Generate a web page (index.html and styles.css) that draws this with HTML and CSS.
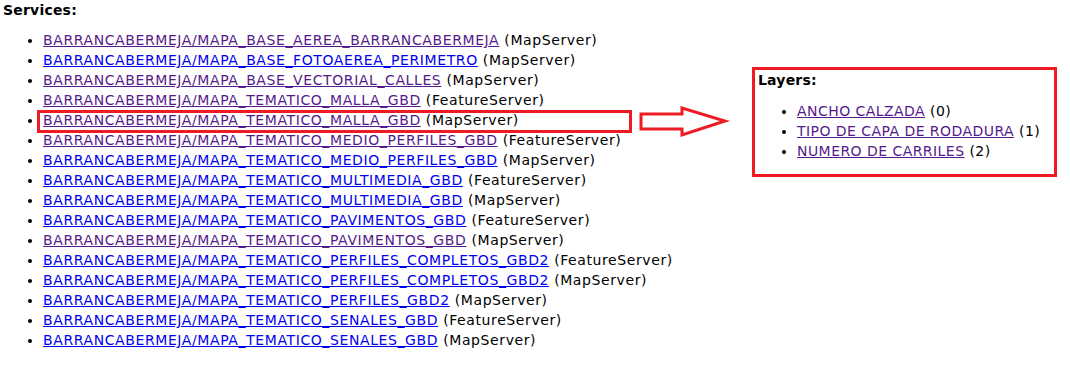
FILE: index.html
```html
<!DOCTYPE html>
<html lang="en">
<head>
    <meta charset="UTF-8">
    <title>ArcGIS REST Services Directory</title>
    <link rel="stylesheet" href="styles.css">
</head>
<body>
    <div class="page">
        <div class="services">
            <b class="title">Services:</b>
            <ul class="list">
                <li><a class="visited" href="#">BARRANCABERMEJA/MAPA_BASE_AEREA_BARRANCABERMEJA</a> (MapServer)</li>
                <li><a href="#">BARRANCABERMEJA/MAPA_BASE_FOTOAEREA_PERIMETRO</a> (MapServer)</li>
                <li><a class="visited" href="#">BARRANCABERMEJA/MAPA_BASE_VECTORIAL_CALLES</a> (MapServer)</li>
                <li><a class="visited" href="#">BARRANCABERMEJA/MAPA_TEMATICO_MALLA_GBD</a> (FeatureServer)</li>
                <li class="picked"><a class="visited" href="#">BARRANCABERMEJA/MAPA_TEMATICO_MALLA_GBD</a> (MapServer)</li>
                <li><a class="visited" href="#">BARRANCABERMEJA/MAPA_TEMATICO_MEDIO_PERFILES_GBD</a> (FeatureServer)</li>
                <li><a href="#">BARRANCABERMEJA/MAPA_TEMATICO_MEDIO_PERFILES_GBD</a> (MapServer)</li>
                <li><a href="#">BARRANCABERMEJA/MAPA_TEMATICO_MULTIMEDIA_GBD</a> (FeatureServer)</li>
                <li><a href="#">BARRANCABERMEJA/MAPA_TEMATICO_MULTIMEDIA_GBD</a> (MapServer)</li>
                <li><a href="#">BARRANCABERMEJA/MAPA_TEMATICO_PAVIMENTOS_GBD</a> (FeatureServer)</li>
                <li><a class="visited" href="#">BARRANCABERMEJA/MAPA_TEMATICO_PAVIMENTOS_GBD</a> (MapServer)</li>
                <li><a href="#">BARRANCABERMEJA/MAPA_TEMATICO_PERFILES_COMPLETOS_GBD2</a> (FeatureServer)</li>
                <li><a href="#">BARRANCABERMEJA/MAPA_TEMATICO_PERFILES_COMPLETOS_GBD2</a> (MapServer)</li>
                <li><a href="#">BARRANCABERMEJA/MAPA_TEMATICO_PERFILES_GBD2</a> (MapServer)</li>
                <li><a href="#">BARRANCABERMEJA/MAPA_TEMATICO_SENALES_GBD</a> (FeatureServer)</li>
                <li><a href="#">BARRANCABERMEJA/MAPA_TEMATICO_SENALES_GBD</a> (MapServer)</li>
            </ul>
        </div>

        <svg class="arrow" width="92" height="32" viewBox="0 0 92 32">
            <polygon points="2,8 43,8 43,2 86,15 43,29 43,23 2,23" fill="none" stroke="#ed1c24" stroke-width="3"/>
        </svg>

        <div class="layers">
            <b class="title">Layers:</b>
            <ul class="list">
                <li><a class="visited" href="#">ANCHO CALZADA</a> (0)</li>
                <li><a class="visited" href="#">TIPO DE CAPA DE RODADURA</a> (1)</li>
                <li><a class="visited" href="#">NUMERO DE CARRILES</a> (2)</li>
            </ul>
        </div>
    </div>
</body>
</html>
```

FILE: styles.css
```css
body {
    margin: 0;
    background: #fff;
    color: #000;
    font-family: "DejaVu Sans", Verdana, sans-serif;
    font-size: 14px;
    letter-spacing: 0.45px;
}
.page {
    display: flex;
    align-items: flex-start;
    padding: 2px 0 0 3px;
}
.services {
    width: 636px;
    flex: none;
}
.title {
    display: block;
    line-height: 16px;
    letter-spacing: 0.2px;
}
.list {
    margin: 12px 0 0 0;
    padding-left: 40px;
    line-height: 20px;
    white-space: nowrap;
}
.services .list {
    letter-spacing: 0.6px;
}
.list li {
    position: relative;
}
a {
    color: #0000ee;
}
a.visited {
    color: #551a8b;
}
.picked::after {
    content: "";
    position: absolute;
    left: -6px;
    top: 0;
    width: 589px;
    height: 17px;
    border: 3px solid #ed1c24;
}
.arrow {
    flex: none;
    margin: 104px 0 0 0;
}
.layers {
    flex: none;
    margin: 65px 0 0 21px;
    width: 296px;
    height: 102px;
    border: 3px solid #ed1c24;
    padding: 2px 0 0 3px;
}
.layers .list {
    margin-top: 13px;
    padding-left: 39px;
}
```
